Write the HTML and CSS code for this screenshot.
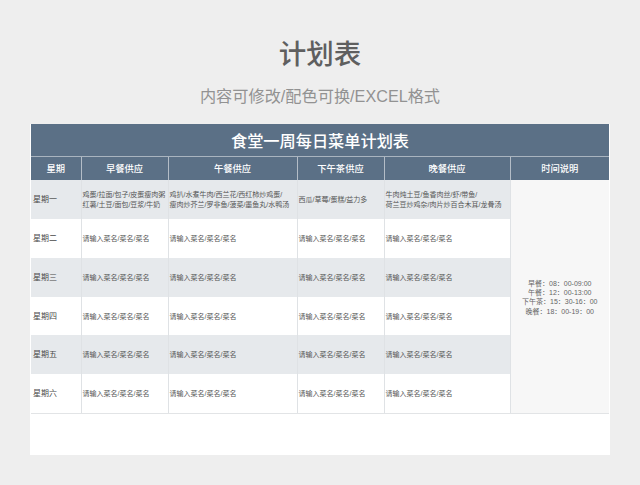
FILE: index.html
```html
<!DOCTYPE html>
<html lang="zh">
<head>
<meta charset="utf-8">
<title>计划表</title>
<link rel="stylesheet" href="styles.css">
</head>
<body>
<header class="intro">
  <h1 class="title">计划表</h1>
  <p class="subtitle">内容可修改/配色可换/EXCEL格式</p>
</header>
<main class="sheet">
  <table class="plan">
    <colgroup>
      <col class="c-day"><col class="c-b"><col class="c-l"><col class="c-t"><col class="c-d"><col class="c-n">
    </colgroup>
    <thead>
      <tr class="banner"><th colspan="6">食堂一周每日菜单计划表</th></tr>
      <tr class="heads">
        <th>星期</th><th>早餐供应</th><th>午餐供应</th><th>下午茶供应</th><th>晚餐供应</th><th>时间说明</th>
      </tr>
    </thead>
    <tbody>
      <tr class="row shade">
        <td class="day">星期一</td>
        <td>鸡蛋/拉面/包子/皮蛋瘦肉粥<br>红薯/土豆/面包/豆浆/牛奶</td>
        <td>鸡扒/水煮牛肉/西兰花/西红柿炒鸡蛋/<br>瘦肉炒芥兰/罗非鱼/菠菜/墨鱼丸/水鸭汤</td>
        <td>西瓜/草莓/蛋糕/益力多</td>
        <td>牛肉炖土豆/鱼香肉丝/虾/带鱼/<br>荷兰豆炒鸡杂/肉片炒百合木耳/龙骨汤</td>
        <td class="note" rowspan="6">早餐：08：00-09:00<br>午餐：12：00-13:00<br>下午茶：15：30-16：00<br>晚餐：18：00-19：00</td>
      </tr>
      <tr class="row">
        <td class="day">星期二</td><td>请输入菜名/菜名/菜名</td><td>请输入菜名/菜名/菜名</td><td>请输入菜名/菜名/菜名</td><td>请输入菜名/菜名/菜名</td>
      </tr>
      <tr class="row shade">
        <td class="day">星期三</td><td>请输入菜名/菜名/菜名</td><td>请输入菜名/菜名/菜名</td><td>请输入菜名/菜名/菜名</td><td>请输入菜名/菜名/菜名</td>
      </tr>
      <tr class="row short">
        <td class="day">星期四</td><td>请输入菜名/菜名/菜名</td><td>请输入菜名/菜名/菜名</td><td>请输入菜名/菜名/菜名</td><td>请输入菜名/菜名/菜名</td>
      </tr>
      <tr class="row shade">
        <td class="day">星期五</td><td>请输入菜名/菜名/菜名</td><td>请输入菜名/菜名/菜名</td><td>请输入菜名/菜名/菜名</td><td>请输入菜名/菜名/菜名</td>
      </tr>
      <tr class="row">
        <td class="day">星期六</td><td>请输入菜名/菜名/菜名</td><td>请输入菜名/菜名/菜名</td><td>请输入菜名/菜名/菜名</td><td>请输入菜名/菜名/菜名</td>
      </tr>
    </tbody>
  </table>
</main>
</body>
</html>
```
FILE: styles.css
```css
* { box-sizing: border-box; }
html, body { margin: 0; padding: 0; }
body {
  width: 640px;
  height: 485px;
  overflow: hidden;
  background: #eeeeee;
  font-family: "Liberation Sans", "Noto Sans CJK SC", sans-serif;
}
.intro {
  height: 124px;
  padding-top: 35px;
  text-align: center;
}
.title {
  margin: 0;
  height: 40px;
  font-size: 27.5px;
  line-height: 40px;
  font-weight: 500;
  color: #5f5f5f;
}
.subtitle {
  margin: 9px 0 0;
  font-size: 16.2px;
  line-height: 24px;
  color: #929292;
}
.sheet {
  width: 580px;
  height: 331px;
  margin-left: 30px;
  padding-left: 1px;
  background: #ffffff;
}
.plan {
  width: 578px;
  table-layout: fixed;
  border-collapse: collapse;
}
.c-day { width: 50px; }
.c-b { width: 87px; }
.c-l { width: 129px; }
.c-t { width: 87px; }
.c-d { width: 126px; }
.c-n { width: 99px; }
.banner th {
  height: 32px;
  padding: 0;
  background: #5b7086;
  border-bottom: 1px solid #a9b4bf;
  color: #ffffff;
  font-size: 16.2px;
  font-weight: 500;
}
.heads th {
  height: 24px;
  padding: 0;
  background: #5b7086;
  border-left: 1px solid #b4bdc7;
  color: #ffffff;
  font-size: 9.3px;
  font-weight: 500;
}
.heads th:first-child { border-left: 0; }
.row td {
  height: 39px;
  padding: 1px 0 0 1px;
  border-left: 1px solid #dfe2e5;
  font-size: 7px;
  line-height: 10px;
  color: #555555;
  white-space: nowrap;
  overflow: hidden;
}
.row.short td { height: 38px; }
.row:last-child td { border-bottom: 1px solid #e2e4e6; }
.shade td { background: #e6e9ec; }
.row .day {
  border-left: 0;
  padding-left: 2px;
  font-size: 8px;
  color: #4a4a4a;
}
.row .note {
  background: #f7f7f7;
  border-bottom: 1px solid #e2e4e6;
  padding: 2px 0 0;
  text-align: center;
  font-size: 7px;
  line-height: 9.3px;
  color: #666666;
}
```
